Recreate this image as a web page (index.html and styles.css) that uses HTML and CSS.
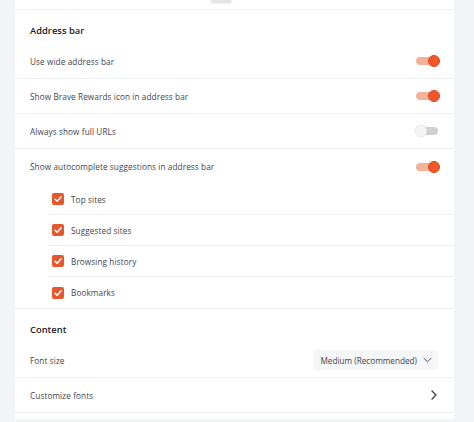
FILE: index.html
```html
<!DOCTYPE html>
<html>
<head>
<meta charset="utf-8">
<link rel="stylesheet" href="styles.css">
</head>
<body>
<div class="page">
  <div class="card">
    <div class="top"><span class="blob"></span></div>

    <div class="section-head">Address bar</div>
    <div class="row"><span class="label">Use wide address bar</span><span class="toggle on"><i></i></span></div>
    <div class="row"><span class="label">Show Brave Rewards icon in address bar</span><span class="toggle on"><i></i></span></div>
    <div class="row"><span class="label">Always show full URLs</span><span class="toggle off"><i></i></span></div>
    <div class="row nodiv"><span class="label">Show autocomplete suggestions in address bar</span><span class="toggle on"><i></i></span></div>
    <div class="sublist">
      <div class="subrow"><span class="check"><svg viewBox="0 0 12 12" width="12" height="12"><path d="M3 6.2 L5.1 8.2 L9 3.9" fill="none" stroke="#fff" stroke-width="1.5" stroke-linecap="round" stroke-linejoin="round"/></svg></span><span class="label">Top sites</span></div>
      <div class="subrow"><span class="check"><svg viewBox="0 0 12 12" width="12" height="12"><path d="M3 6.2 L5.1 8.2 L9 3.9" fill="none" stroke="#fff" stroke-width="1.5" stroke-linecap="round" stroke-linejoin="round"/></svg></span><span class="label">Suggested sites</span></div>
      <div class="subrow"><span class="check"><svg viewBox="0 0 12 12" width="12" height="12"><path d="M3 6.2 L5.1 8.2 L9 3.9" fill="none" stroke="#fff" stroke-width="1.5" stroke-linecap="round" stroke-linejoin="round"/></svg></span><span class="label">Browsing history</span></div>
      <div class="subrow last"><span class="check"><svg viewBox="0 0 12 12" width="12" height="12"><path d="M3 6.2 L5.1 8.2 L9 3.9" fill="none" stroke="#fff" stroke-width="1.5" stroke-linecap="round" stroke-linejoin="round"/></svg></span><span class="label">Bookmarks</span></div>
    </div>

    <div class="section-head">Content</div>
    <div class="row"><span class="label">Font size</span>
      <span class="select">Medium (Recommended)<svg viewBox="0 0 10 6" width="9" height="6"><path d="M1 1 L5 5 L9 1" fill="none" stroke="#4a4c57" stroke-width="1.1" stroke-linecap="round" stroke-linejoin="round"/></svg></span>
    </div>
    <div class="row"><span class="label">Customize fonts</span>
      <svg class="chev" viewBox="0 0 6 10" width="6" height="10"><path d="M1 1 L5 5 L1 9" fill="none" stroke="#3b3d48" stroke-width="1.3" stroke-linecap="round" stroke-linejoin="round"/></svg>
    </div>
    <div class="tail"></div>
  </div>
</div>
</body>
</html>
```
FILE: styles.css
```css
html, body {
  margin: 0;
  padding: 0;
  background: #f3f4f7;
}
body {
  font-family: "Open Sans", "Noto Sans", sans-serif;
  color: #42444f;
  font-size: 8.2px;
}
.page {
  padding-left: 15px;
  width: 439px;
  height: 422px;
  overflow: hidden;
}
.card {
  background: #fff;
  height: 419px;
  overflow: hidden;
}
.top {
  height: 10px;
  border-bottom: 1px solid #eceef2;
  box-sizing: border-box;
  display: flex;
  padding-left: 195px;
}
.blob {
  width: 22px;
  height: 3px;
  background: #d9dadd;
  filter: blur(1px);
  border-radius: 0 0 6px 6px;
}
.section-head {
  height: 34px;
  box-sizing: border-box;
  padding: 15px 15px 0;
  font-weight: 600;
  font-size: 9.4px;
  color: #1f2029;
  line-height: 12px;
}
.row {
  height: 35px;
  box-sizing: border-box;
  border-bottom: 1px solid #eceef2;
  display: flex;
  align-items: center;
  justify-content: space-between;
  padding: 0 14px 0 15px;
}
.row.nodiv {
  border-bottom: none;
}
.label {
  letter-spacing: 0.1px;
}
.toggle {
  position: relative;
  width: 25px;
  height: 12px;
  display: flex;
  align-items: center;
}
.toggle::before {
  content: "";
  display: block;
  width: 22px;
  height: 8px;
  margin-left: 1px;
  border-radius: 4px;
  background: #f2b39b;
}
.toggle i {
  position: absolute;
  top: 0;
  width: 12px;
  height: 12px;
  border-radius: 50%;
  box-sizing: border-box;
}
.toggle.on i {
  right: 0;
  background: #f2572a;
  border: 1px solid #d9491f;
}
.toggle.off::before {
  background: #cfd0d4;
}
.toggle.off i {
  left: 0;
  background: #f4f4f5;
  box-shadow: 0 0 1px rgba(0,0,0,0.25);
}
.sublist {
  padding-left: 33px;
  border-bottom: 1px solid #eceef2;
}
.subrow {
  height: 31px;
  box-sizing: border-box;
  border-bottom: 1px solid #eceef2;
  display: flex;
  align-items: center;
  padding-left: 4px;
  gap: 7px;
}
.subrow.last {
  border-bottom: none;
}
.check {
  width: 12px;
  height: 12px;
  border-radius: 2px;
  background: #e5582f;
  display: flex;
}
.select {
  display: flex;
  align-items: center;
  gap: 6px;
  height: 20px;
  padding: 0 6px 0 8px;
  margin-right: 2px;
  background: #f5f6f8;
  border-radius: 3px;
  font-size: 8.2px;
}
.chev {
  margin-right: 3px;
}
.tail {
  height: 8px;
}
```
